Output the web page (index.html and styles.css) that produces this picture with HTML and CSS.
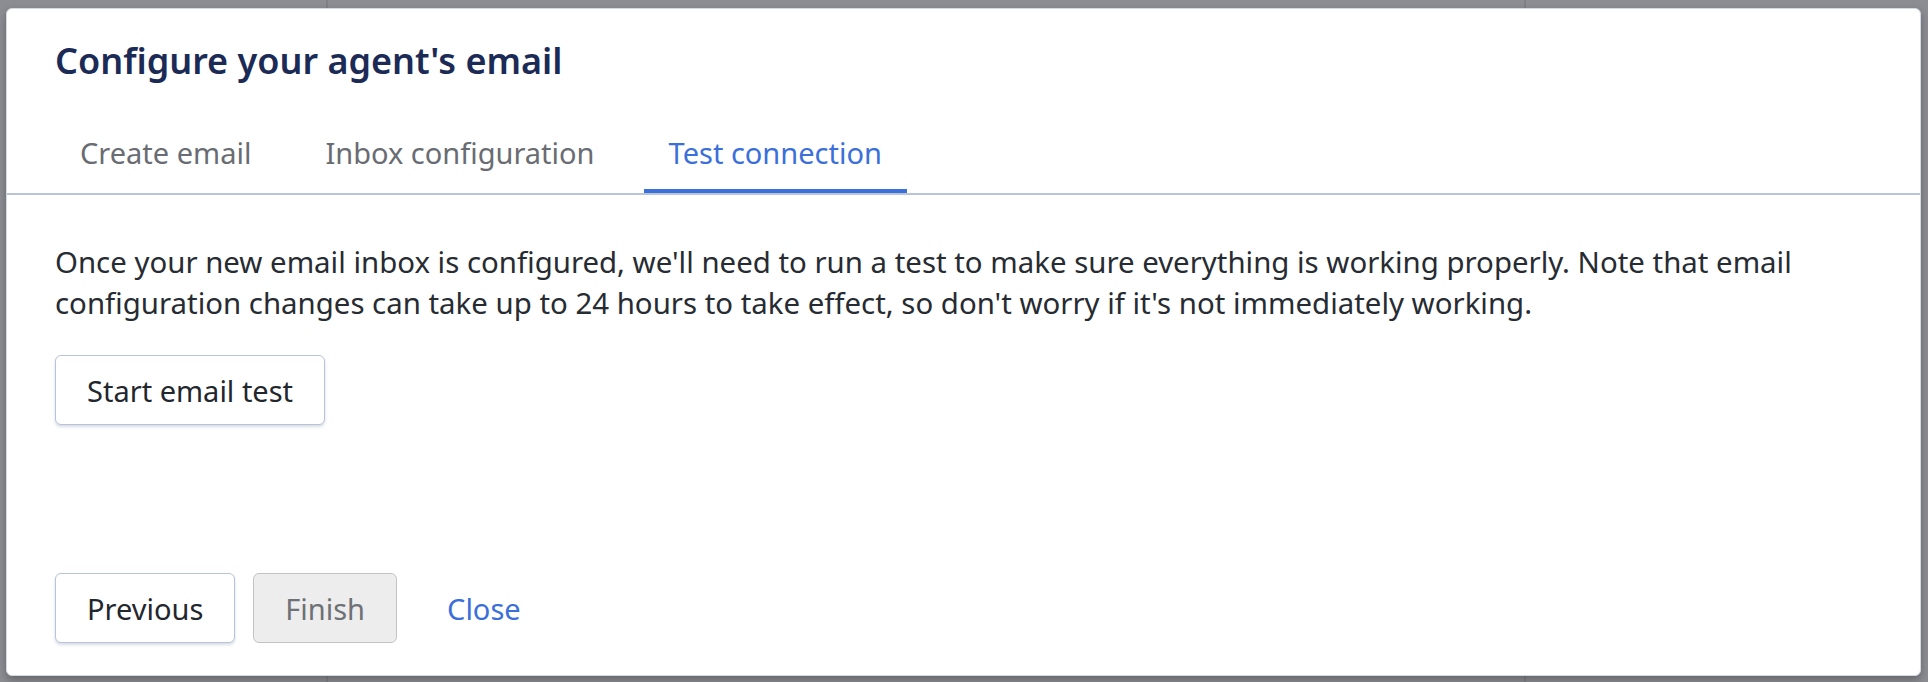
FILE: index.html
```html
<!DOCTYPE html>
<html lang="en">
<head>
<meta charset="utf-8">
<title>Configure your agent's email</title>
<link rel="stylesheet" href="styles.css">
</head>
<body>
<div class="modal">
  <h1 class="modal-title">Configure your agent's email</h1>
  <nav class="tabs">
    <span class="tab">Create email</span>
    <span class="tab">Inbox configuration</span>
    <span class="tab tab-active">Test connection</span>
  </nav>
  <div class="modal-body">
    <p class="desc">Once your new email inbox is configured, we'll need to run a test to make sure everything is working properly. Note that email configuration changes can take up to 24 hours to take effect, so don't worry if it's not immediately working.</p>
    <button class="btn start-btn" type="button">Start email test</button>
  </div>
  <div class="modal-footer">
    <button class="btn" type="button">Previous</button>
    <button class="btn btn-disabled" type="button" disabled>Finish</button>
    <button class="btn btn-link" type="button">Close</button>
  </div>
</div>
</body>
</html>
```
FILE: styles.css
```css
html, body {
  margin: 0;
  height: 100%;
}
body {
  box-sizing: border-box;
  padding: 8px 7px 6px 6px;
  font-family: "Noto Sans", sans-serif;
  background:
    linear-gradient(90deg, transparent 326px, rgba(0,0,0,.09) 326px 328px, transparent 328px 1524px, rgba(0,0,0,.09) 1524px 1526px, transparent 1526px),
    #8b8d92;
}
.modal {
  height: 100%;
  box-sizing: border-box;
  display: flex;
  flex-direction: column;
  background: #fff;
  border: 1px solid #d3d9e4;
  border-radius: 6px;
  box-shadow: 0 4px 8px rgba(0,0,0,.28);
}
.modal-title {
  margin: 0;
  padding: 28px 48px 0;
  font-size: 36px;
  font-weight: 600;
  line-height: 48px;
  color: #1b2b56;
}
.tabs {
  display: flex;
  gap: 24px;
  margin-top: 32px;
  padding: 0 48px;
  border-bottom: 2px solid #b9c4d7;
}
.tab {
  padding: 16px 25px;
  font-size: 29px;
  line-height: 40px;
  color: #696c72;
  border-bottom: 4px solid transparent;
}
.tab-active {
  color: #3b6fd9;
  border-bottom-color: #3b6fd9;
}
.modal-body {
  padding: 47px 48px 0;
}
.desc {
  margin: 0;
  font-size: 29.4px;
  line-height: 41px;
  color: #272b32;
}
.btn {
  height: 70px;
  padding: 0 31px;
  font-family: inherit;
  font-size: 29px;
  color: #22262d;
  background: #fff;
  border: 1px solid #b8c3d9;
  border-radius: 6px;
  box-shadow: 0 2px 3px rgba(40,60,100,.18);
}
.start-btn {
  margin-top: 31px;
}
.modal-footer {
  margin-top: auto;
  display: flex;
  gap: 18px;
  padding: 0 48px 32px;
}
.btn-disabled {
  background: #ededed;
  border-color: #c3c3c3;
  color: #6e7176;
  box-shadow: none;
}
.btn-link {
  background: transparent;
  border-color: transparent;
  box-shadow: none;
  color: #3b6fd9;
}
```
